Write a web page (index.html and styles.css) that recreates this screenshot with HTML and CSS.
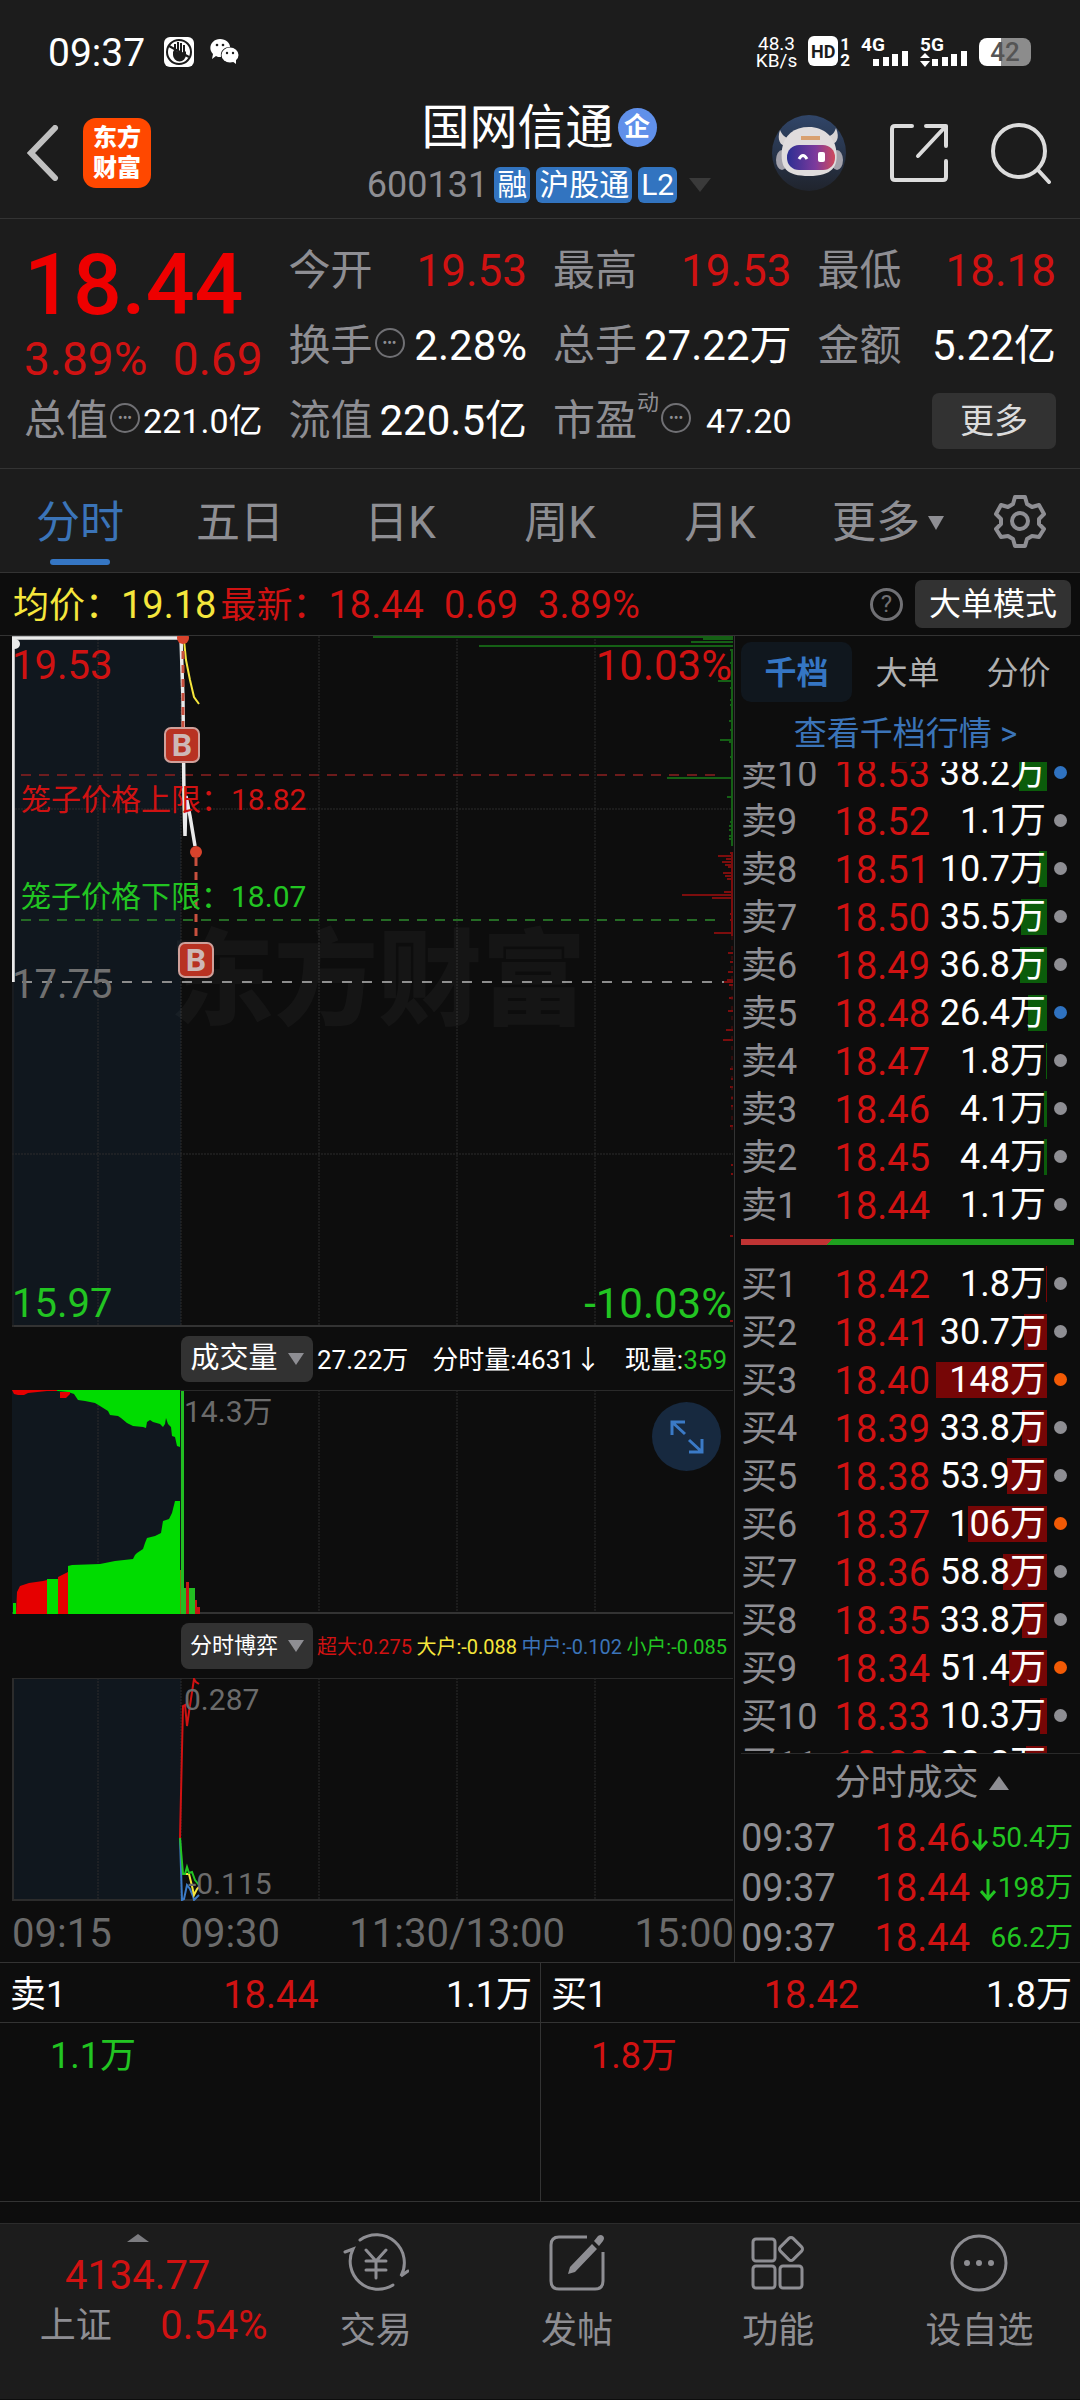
FILE: index.html
```html
<!DOCTYPE html>
<html lang="zh-CN">
<head>
<meta charset="utf-8">
<meta name="viewport" content="width=device-width, initial-scale=1">
<title>国网信通 600131</title>
<link rel="stylesheet" href="styles.css">
</head>
<body>
<div class="app">

  <div class="status">
    <span class="status-time">09:37</span>
    <svg class="status-hand" viewBox="0 0 30 30" aria-hidden="true"><rect width="30" height="30" rx="6" fill="#fff"/><circle cx="15" cy="15" r="12" fill="none" stroke="#1c1c1c" stroke-width="2"/><path d="M9 15v3a6 6 0 0 0 13 0v-4l-3 3-9-4z" fill="#1c1c1c"/><path d="M11 14V7M14 14V5M17 15V6M20 16V8M5 9l20 11" stroke="#1c1c1c" stroke-width="2" fill="none"/></svg>
    <svg class="status-chat" viewBox="0 0 29 26" aria-hidden="true"><path d="M10 0c6 0 10 4 10 8-6 0-10 4-9 10-2 0-4 0-5-1l-4 3 1-5C-3 9 2 0 10 0z" fill="#fff"/><ellipse cx="20" cy="16" rx="8.500" ry="7.500" fill="#fff"/><path d="M22 22l4 3v-5z" fill="#fff"/><circle cx="7" cy="6" r="1.300" fill="#1c1c1c"/><circle cx="13" cy="6" r="1.300" fill="#1c1c1c"/><circle cx="17" cy="14" r="1.200" fill="#1c1c1c"/><circle cx="23" cy="14" r="1.200" fill="#1c1c1c"/></svg>
    <div class="status-right">
      <div class="net-speed"><span>48.3</span><span>KB/s</span></div>
      <div class="hd"><span class="hd-box">HD</span><span class="hd-sims"><span>1</span><span>2</span></span></div>
      <div class="signal"><span>4G</span><svg viewBox="0 0 48 30" aria-hidden="true"><path d="M15 29v-7M25 29v-9M34 29V17M44 29V14" stroke="#fff" stroke-width="6"/></svg></div>
      <div class="signal"><span>5G</span><svg viewBox="0 0 48 30" aria-hidden="true"><path d="M15 29v-7M25 29v-9M34 29V17M44 29V14" stroke="#fff" stroke-width="6"/><path d="M0 21l5-5 5 5zM0 24l5 6 5-6z" fill="#fff"/></svg></div>
      <div class="battery">42</div>
    </div>
  </div>

  <header class="head">
    <div class="head-left">
      <button class="icon-btn back" aria-label="返回"><svg width="32" height="56" viewBox="0 0 32 56"><path d="M28 3L4 28l24 25" fill="none" stroke="#c0c0c0" stroke-width="6" stroke-linecap="round"/></svg></button>
      <a class="logo" href="#"><span>东方</span><span>财富</span></a>
    </div>
    <div class="title-box">
      <h1 class="name">国网信通<span class="ent">企</span></h1>
      <div class="sub"><span class="code">600131</span><span class="chip">融</span><span class="chip">沪股通</span><span class="chip">L2</span><svg class="sub-tri" width="22" height="14" viewBox="0 0 22 14"><path d="M0 0h22L11 14z" fill="#3a3a3a"/></svg></div>
    </div>
    <div class="head-actions">
      <button class="icon-btn" aria-label="智能助手"><svg width="76" height="78" viewBox="0 0 76 78"><defs><linearGradient id="sky" x1="0" y1="0" x2="0" y2="1"><stop offset="0" stop-color="#304568"/><stop offset="1" stop-color="#20242d"/></linearGradient><linearGradient id="visor" x1="0" y1="0" x2="1" y2="0"><stop offset="0" stop-color="#2c2f93"/><stop offset=".6" stop-color="#7d3a9c"/><stop offset="1" stop-color="#d04a5c"/></linearGradient></defs><ellipse cx="38" cy="39" rx="37" ry="38" fill="url(#sky)"/><path d="M9 16c-4 12 2 18 10 15l4-7c-7 1-11-1-14-8zM65 14c5 12-1 18-9 16l-4-7c8 0 11-3 13-9z" fill="#d8d4d4"/><ellipse cx="11" cy="46" rx="6" ry="10" fill="#a3a1aa"/><ellipse cx="66" cy="46" rx="6" ry="10" fill="#a3a1aa"/><path d="M38 13c15 0 25 10 27 22 3 18-4 27-27 27S9 54 11 35c2-14 12-22 27-22z" fill="#e0dcdd"/><path d="M30 24h19" stroke="#d9a070" stroke-width="4"/><rect x="16" y="31" width="48" height="25" rx="12" fill="url(#visor)"/><path d="M28 45q4-7 8 0" stroke="#fff" stroke-width="3" fill="none"/><rect x="47" y="38" width="7" height="10" rx="2" fill="#fff"/></svg></button>
      <button class="icon-btn" aria-label="分享"><svg width="60" height="60" viewBox="0 0 60 60" fill="none" stroke="#dcdcdc" stroke-width="4" stroke-linecap="round" stroke-linejoin="round"><path d="M23 3H6q-3 0-3 3v48q0 3 3 3h48q3 0 3-3V38M37 3h20v20M57 3L29 33"/></svg></button>
      <button class="icon-btn" aria-label="搜索"><svg width="60" height="62" viewBox="0 0 60 62" fill="none" stroke="#dcdcdc" stroke-width="4" stroke-linecap="round"><circle cx="28" cy="29" r="26"/><path d="M47 48l11 12"/></svg></button>
    </div>
  </header>

  <section class="quote">
    <div class="q-main">
      <strong class="q-price">18.44</strong>
      <div class="q-change"><span>3.89%</span><span>0.69</span></div>
    </div>
    <div class="q-cell"><span>今开</span><b class="red">19.53</b></div>
    <div class="q-cell"><span>最高</span><b class="red">19.53</b></div>
    <div class="q-cell"><span>最低</span><b class="red">18.18</b></div>
    <div class="q-cell"><span>换手<i class="more-dot">•••</i></span><b>2.28%</b></div>
    <div class="q-cell"><span>总手</span><b>27.22万</b></div>
    <div class="q-cell"><span>金额</span><b>5.22亿</b></div>
    <div class="q-cell"><span>总值<i class="more-dot">•••</i></span><b class="small">221.0亿</b></div>
    <div class="q-cell"><span>流值</span><b>220.5亿</b></div>
    <div class="q-cell"><span>市盈<sup>动</sup><i class="more-dot">•••</i></span><b class="small">47.20</b></div>
    <div class="q-cell q-end"><button class="q-more">更多</button></div>
  </section>

  <nav class="tabs">
    <button class="tab on">分时</button>
    <button class="tab">五日</button>
    <button class="tab">日K</button>
    <button class="tab">周K</button>
    <button class="tab">月K</button>
    <button class="tab tab-more">更多<svg width="16" height="14" viewBox="0 0 16 14"><path d="M0 0h16L8 14z" fill="#8e8e93"/></svg></button>
    <button class="tab tab-set" aria-label="设置"><svg width="52" height="54" viewBox="0 0 52 54" fill="none" stroke="#8e8e93" stroke-width="4" stroke-linejoin="round"><circle cx="26" cy="27" r="8"/><path d="M21 3h10l2 7 5 3 7-2 5 9-5 5v5l5 5-5 8-7-1-5 3-2 7H21l-2-7-5-3-7 1-5-8 5-5v-5l-5-5 5-9 7 2 5-3z"/></svg></button>
  </nav>

  <div class="avg-row">
    <span class="yellow">均价：<b>19.18</b></span>
    <span class="red">最新：<b>18.44</b><b>0.69</b><b>3.89%</b></span>
    <button class="help" aria-label="帮助">?</button>
    <button class="big-mode">大单模式</button>
  </div>

  <main class="board">
    <section class="charts">
      <div class="chart price-chart">
        <span class="mark">东方财富</span>
        <svg viewBox="0 0 722 691" preserveAspectRatio="none">
          <rect width="169" height="691" fill="#10171e"/>
          <path d="M86 0v691M169 0v691M307 0v691M445 0v691M583 0v691M0 173h721M0 518h721" stroke="#2c2c2c" stroke-dasharray="2 1" fill="none"/>
          <path d="M0 690h721" stroke="#333" stroke-width="2"/><path d="M1 346v345" stroke="#222"/>
          <path d="M10 346h711" stroke="#8c8c8c" stroke-width="2" stroke-dasharray="10 10"/>
          <path d="M9 139h702" stroke="#8c2020" stroke-width="1.500" stroke-dasharray="10 8"/>
          <path d="M9 284h702" stroke="#256b25" stroke-width="2" stroke-dasharray="10 8"/>
          <path d="M361 1H721M691 3H721M679 6H721M467 10H721M718 14H721M719 20H721M718 27H721M719 34H721M706 45H721M718 52H721M718 64H721M718 69H721M717 85H721M718 94H721M708 104H721M717 106H721M718 121H721M719 129H721M655 142H721M719 152H721M715 161H721M719 180H721M718 186H721M717 190H721M717 194H721M717 200H721M717 203H721M720 15V210" stroke="#156015" stroke-width="2"/>
          <path d="M718 217H721M706 220H721M714 223H721M710 226H721M713 229H721M716 231H721M711 237H721M713 240H721M715 243H721M719 248H721M712 256H721M670 259H721M700 262H721M718 278H721M718 284H721M702 297H721M716 317H721M718 326H721M716 336H721M715 344H721M712 346H721M717 349H721M717 362H721M716 375H721M714 394H721M711 404H721M718 433H721M719 443H721M718 451H721M719 462H721M719 470H721M718 490H721M719 529H721M719 538H721M718 600H721M718 685H721M720 217V300" stroke="#7c0d0d" stroke-width="2"/>
          <path d="M720 300V500" stroke="#5a0d0d" stroke-dasharray="4 6"/>
          <path d="M172 4l2 20 4 20 4 17 5 7" stroke="#f5e63c" stroke-width="2" fill="none"/>
          <path d="M1 346V2H169l2 62 1 100 1 36 1-40 4 20 3 18 2 12" stroke="#eaeaea" stroke-width="3.500" fill="none"/>
          <circle cx="3" cy="8" r="5" fill="#eaeaea"/>
          <path d="M171 15v76M184 222v84" stroke="#c8503e" stroke-width="3" stroke-dasharray="8 6"/>
          <circle cx="171" cy="2" r="6" fill="#d8432c"/><circle cx="184" cy="216" r="6" fill="#d8432c"/>
        </svg>
        <span class="lab top-left red">19.53</span>
        <span class="lab top-right red">10.03%</span>
        <span class="lab mid-left">17.75</span>
        <span class="lab bottom-left green">15.97</span>
        <span class="lab bottom-right green">-10.03%</span>
        <span class="cage cage-up red">笼子价格上限：18.82</span>
        <span class="cage cage-down green">笼子价格下限：18.07</span>
        <span class="buy buy-first">B</span>
        <span class="buy buy-second">B</span>
      </div>

      <div class="chart-head">
        <button class="pick">成交量<svg width="16" height="12" viewBox="0 0 16 12"><path d="M0 0h16L8 12z" fill="#8e8e93"/></svg></button>
        <div class="figures vol-figures"><span>27.22万</span><span>分时量:4631↓</span><span>现量:<span class="green">359</span></span></div>
      </div>

      <div class="chart volume-chart">
        <svg viewBox="0 0 722 224" preserveAspectRatio="none">
          <rect width="169" height="224" fill="#10171e"/>
          <path d="M86 0v224M307 0v224M445 0v224M583 0v224" stroke="#2c2c2c" stroke-dasharray="2 1"/>
          <path d="M0 .5h721" stroke="#2a2a2a"/><path d="M0 223h721" stroke="#333" stroke-width="2"/>
          <path d="M35 0L56 2 62 4 66 10 73 11 83 13 88 16 96 21 98 25 106 26 109 28 115 33 121 36 131 37 134 38 135 32 138 30 141 32 148 34 151 37 153 34 154 28 156 34 159 37 160 46 163 47 165 56 168 57V0z" fill="#00dc00"/>
          <path d="M0 0l2 4 4 1h6l4-2 19-2h10V0zM48 2v6h6l4-4V2z" fill="#e60000"/>
          <path d="M4 224l1-22 3-6 9-3 14-2 4-1v34z M46 224v-37l10-5v42z" fill="#e60000"/>
          <path d="M1 224v-11h3v11z M35 224v-35h11v35z M56 224v-48l4-1 28-1 15-3 18-2 2-4 2-2 6-4 2-6 2-5 8-2 6-3 2-12 6-2 3-6 3-12h5v114z" fill="#00dc00"/>
          <path d="M169 1h3v223h-3zM172 198h11v26h-11z" fill="#22bd22"/>
          <path d="M174 192h3v32h-3zM183 210h2v14h-2zM185 217h3v7h-3z" fill="#c81414"/><path d="M168.500 180v44" stroke="#7a7a10"/>
        </svg>
        <span class="mini mini-top">14.3万</span>
        <button class="expand" aria-label="全屏"><svg width="34" height="34" viewBox="0 0 34 34" fill="none" stroke="#3b7ac6" stroke-width="3"><path d="M2 15V2h13M2 2l13 12M32 19v13H19M32 32L19 20"/></svg></button>
      </div>

      <div class="chart-head">
        <button class="pick pick-small">分时博弈<svg width="16" height="12" viewBox="0 0 16 12"><path d="M0 0h16L8 12z" fill="#8e8e93"/></svg></button>
        <div class="figures game-figures"><span class="red">超大:0.275</span><span class="yellow">大户:-0.088</span><span class="blue">中户:-0.102</span><span class="green">小户:-0.085</span></div>
      </div>

      <div class="chart game-chart">
        <svg viewBox="0 0 722 223" preserveAspectRatio="none">
          <rect width="169" height="223" fill="#10171e"/>
          <path d="M86 0v223M169 0v223M307 0v223M445 0v223M583 0v223" stroke="#2c2c2c" stroke-dasharray="2 1"/>
          <path d="M0 .5h721" stroke="#2a2a2a"/><path d="M0 222h721M1 0v223" stroke="#2c2c2c" stroke-width="2"/>
          <g fill="none" stroke-width="2">
            <path d="M168 160L170 222 172 221 175 207 178 211 181 218 182 222 187 217" stroke="#3b7ac6"/>
            <path d="M171 196h6l3 12 2 9 3-6 2-2" stroke="#f5e63c"/>
            <path d="M168 160l3 36h2l2-7 2 6 3-1 3 8 4 5" stroke="#22c522"/>
            <path d="M168 160L171 28 173 27 175 48 177 34 182 1 184 4 187 6" stroke="#d01212"/>
          </g>
        </svg>
        <span class="mini mini-top">0.287</span>
        <span class="mini mini-bottom">-0.115</span>
      </div>

      <div class="axis"><span>09:15</span><span>09:30</span><span>11:30/13:00</span><span>15:00</span></div>
    </section>

    <aside class="side">
      <div class="side-tabs"><button class="side-tab on">千档</button><button class="side-tab">大单</button><button class="side-tab">分价</button></div>
      <a class="side-link" href="#">查看千档行情 &gt;</a>
      <div class="book asks">
        <table>
          <tr><th>卖10</th><td class="p">18.53</td><td class="v"><i style="width:28px"></i><span>38.2万</span></td><td class="d"><i class="hot-blue"></i></td></tr>
          <tr><th>卖9</th><td class="p">18.52</td><td class="v"><span>1.1万</span></td><td class="d"><i></i></td></tr>
          <tr><th>卖8</th><td class="p">18.51</td><td class="v"><i style="width:8px"></i><span>10.7万</span></td><td class="d"><i></i></td></tr>
          <tr><th>卖7</th><td class="p">18.50</td><td class="v"><i style="width:26px"></i><span>35.5万</span></td><td class="d"><i></i></td></tr>
          <tr><th>卖6</th><td class="p">18.49</td><td class="v"><i style="width:27px"></i><span>36.8万</span></td><td class="d"><i></i></td></tr>
          <tr><th>卖5</th><td class="p">18.48</td><td class="v"><i style="width:19px"></i><span>26.4万</span></td><td class="d"><i class="hot-blue"></i></td></tr>
          <tr><th>卖4</th><td class="p">18.47</td><td class="v"><i style="width:1px"></i><span>1.8万</span></td><td class="d"><i></i></td></tr>
          <tr><th>卖3</th><td class="p">18.46</td><td class="v"><i style="width:3px"></i><span>4.1万</span></td><td class="d"><i></i></td></tr>
          <tr><th>卖2</th><td class="p">18.45</td><td class="v"><i style="width:3px"></i><span>4.4万</span></td><td class="d"><i></i></td></tr>
          <tr><th>卖1</th><td class="p">18.44</td><td class="v"><span>1.1万</span></td><td class="d"><i></i></td></tr>
        </table>
      </div>
      <div class="ratio"></div>
      <div class="book bids">
        <table>
          <tr><th>买1</th><td class="p">18.42</td><td class="v"><i style="width:1px"></i><span>1.8万</span></td><td class="d"><i></i></td></tr>
          <tr><th>买2</th><td class="p">18.41</td><td class="v"><i style="width:23px"></i><span>30.7万</span></td><td class="d"><i></i></td></tr>
          <tr><th>买3</th><td class="p">18.40</td><td class="v"><i style="width:111px"></i><span>148万</span></td><td class="d"><i class="hot-orange"></i></td></tr>
          <tr><th>买4</th><td class="p">18.39</td><td class="v"><i style="width:25px"></i><span>33.8万</span></td><td class="d"><i></i></td></tr>
          <tr><th>买5</th><td class="p">18.38</td><td class="v"><i style="width:40px"></i><span>53.9万</span></td><td class="d"><i></i></td></tr>
          <tr><th>买6</th><td class="p">18.37</td><td class="v"><i style="width:79px"></i><span>106万</span></td><td class="d"><i class="hot-orange"></i></td></tr>
          <tr><th>买7</th><td class="p">18.36</td><td class="v"><i style="width:44px"></i><span>58.8万</span></td><td class="d"><i></i></td></tr>
          <tr><th>买8</th><td class="p">18.35</td><td class="v"><i style="width:25px"></i><span>33.8万</span></td><td class="d"><i></i></td></tr>
          <tr><th>买9</th><td class="p">18.34</td><td class="v"><i style="width:38px"></i><span>51.4万</span></td><td class="d"><i class="hot-orange"></i></td></tr>
          <tr><th>买10</th><td class="p">18.33</td><td class="v"><i style="width:7px"></i><span>10.3万</span></td><td class="d"><i></i></td></tr>
          <tr><th>买11</th><td class="p">18.32</td><td class="v"><i style="width:21px"></i><span>28.8万</span></td><td class="d"><i></i></td></tr>
        </table>
      </div>
      <button class="ticks-title">分时成交<svg width="20" height="14" viewBox="0 0 20 14"><path d="M10 0l10 14H0z" fill="#8e8e93"/></svg></button>
      <table class="ticks">
        <tr><td class="t">09:37</td><td class="p">18.46</td><td class="n"><svg width="16" height="22" viewBox="0 0 16 22"><path d="M8 0v19M1 12l7 8 7-8" fill="none" stroke="#22c522" stroke-width="3"/></svg>50.4万</td></tr>
        <tr><td class="t">09:37</td><td class="p">18.44</td><td class="n"><svg width="16" height="22" viewBox="0 0 16 22"><path d="M8 0v19M1 12l7 8 7-8" fill="none" stroke="#22c522" stroke-width="3"/></svg>198万</td></tr>
        <tr><td class="t">09:37</td><td class="p">18.44</td><td class="n">66.2万</td></tr>
      </table>
    </aside>
  </main>

  <section class="queues">
    <div class="queue">
      <div class="queue-head"><span>卖1</span><span class="red num">18.44</span><span>1.1万</span></div>
      <div class="queue-body"><span class="green">1.1万</span></div>
    </div>
    <div class="queue">
      <div class="queue-head"><span>买1</span><span class="red num">18.42</span><span>1.8万</span></div>
      <div class="queue-body"><span class="red">1.8万</span></div>
    </div>
  </section>

  <footer class="bottom">
    <a class="index" href="#">
      <svg width="22" height="8" viewBox="0 0 22 8"><path d="M11 0l11 8H0z" fill="#7c7c80"/></svg>
      <span class="index-value">4134.77</span>
      <span class="index-row"><span>上证</span><span class="index-rate">0.54%</span></span>
    </a>
    <a class="nav-item" href="#"><svg width="66" height="60" viewBox="0 0 66 60" fill="none" stroke="#8e8e93" stroke-width="3" stroke-linecap="round"><path d="M17 7A28 28 0 0 1 58 43l7-5M50 52A28 28 0 0 1 10 16L2 19M23 17l10 11 10-11M33 28v17M23 28h20M23 37h20"/></svg><span>交易</span></a>
    <a class="nav-item" href="#"><svg width="56" height="60" viewBox="0 0 56 60"><path d="M38 4H10q-8 0-8 8v36q0 8 8 8h36q8 0 8-8V19" fill="none" stroke="#8e8e93" stroke-width="3"/><path d="M43 11l5 5-22 23-7 2 2-7zM45 8l4-5q3-2 5 0t0 5l-4 5z" fill="#8e8e93"/></svg><span>发帖</span></a>
    <a class="nav-item" href="#"><svg width="54" height="60" viewBox="0 0 54 60" fill="none" stroke="#8e8e93" stroke-width="3"><rect x="2" y="6" width="22" height="22" rx="3"/><rect x="2" y="33" width="22" height="22" rx="3"/><rect x="29" y="33" width="22" height="22" rx="3"/><rect x="31" y="7" width="18" height="18" rx="3" transform="rotate(45 40 16)"/></svg><span>功能</span></a>
    <a class="nav-item" href="#"><svg width="60" height="60" viewBox="0 0 60 60"><circle cx="30" cy="30" r="27" fill="none" stroke="#8e8e93" stroke-width="3"/><g fill="#8e8e93"><circle cx="18" cy="30" r="3"/><circle cx="30" cy="30" r="3"/><circle cx="42" cy="30" r="3"/></g></svg><span>设自选</span></a>
  </footer>
</div>
</body>
</html>
```
FILE: styles.css
```css
* { box-sizing: border-box; }

body {
  margin: 0;
  background: #0d0d0d;
  color: #fff;
  font-family: Roboto, "Noto Sans CJK SC", sans-serif;
  font-size: 36px;
  line-height: 1;
}

button {
  display: flex;
  align-items: center;
  justify-content: center;
  padding: 0;
  border: 0;
  background: none;
  color: inherit;
  font: inherit;
}

a { color: inherit; text-decoration: none; }
b, i, th, h1 { font-weight: 400; font-style: normal; }
svg { flex: none; }

.red { color: #d01212; }
.green { color: #22c522; }
.yellow { color: #f5e63c; }
.blue { color: #3b74b8; }

.app { min-height: 100vh; }

/* Status bar */
.status {
  display: flex;
  align-items: center;
  height: 88px;
  padding: 16px 49px 0 48px;
  background: #1c1c1c;
}
.status-time { padding-top: 2px; font-size: 39px; }
.status-hand { width: 30px; height: 30px; margin-left: 19px; }
.status-chat { width: 29px; height: 26px; margin-left: 16px; }
.status-right { display: flex; align-items: center; gap: 11px; margin-left: auto; }
.net-speed { display: flex; flex-direction: column; align-items: center; font-size: 19px; line-height: 17px; }
.hd { display: flex; gap: 2px; }
.hd-box { width: 30px; height: 30px; border-radius: 6px; background: #fff; color: #1c1c1c; font-size: 18px; font-weight: 700; line-height: 31px; text-align: center; }
.hd-sims { display: flex; flex-direction: column; font-size: 17px; font-weight: 700; line-height: 16px; }
.signal { position: relative; width: 48px; height: 30px; font-size: 19px; font-weight: 700; line-height: 16px; }
.signal svg { position: absolute; inset: 0; }
.battery { width: 52px; height: 28px; border-radius: 8px; background: linear-gradient(90deg, #fff 42%, #8c8c8c 42%); color: #555; font-size: 26px; font-weight: 500; line-height: 28px; text-align: center; }

/* Header */
.head {
  display: grid;
  grid-template-columns: 280px 1fr 280px;
  align-items: center;
  height: 131px;
  padding: 0 29px 0 27px;
  border-bottom: 1px solid #333;
  background: #1c1c1c;
}
.head-left { display: flex; align-items: center; gap: 24px; }
.logo {
  display: flex;
  flex-direction: column;
  justify-content: center;
  width: 68px;
  height: 70px;
  border-radius: 13px;
  background: #ff4800;
  font-size: 24px;
  font-weight: 900;
  line-height: 30px;
  text-align: center;
}
.title-box { display: flex; flex-direction: column; align-items: center; gap: 10px; white-space: nowrap; }
.name { display: flex; align-items: center; gap: 4px; margin: 0; font-size: 48px; line-height: 58px; }
.ent { width: 39px; height: 39px; border-radius: 50%; background: #6090ea; font-size: 26px; font-weight: 700; line-height: 38px; text-align: center; }
.sub { display: flex; align-items: center; gap: 6px; margin-bottom: 5px; }
.code { color: #8e8e93; font-size: 36px; }
.chip { height: 36px; padding: 0 3px; border-radius: 6px; background: #3274c0; font-size: 30px; line-height: 36px; }
.sub-tri { margin-left: 6px; }
.head-actions { display: flex; align-items: center; justify-content: space-between; }

/* Quote figures */
.quote {
  display: grid;
  grid-template-columns: repeat(4, 1fr);
  grid-template-rows: 76px 74px 75px;
  column-gap: 26px;
  height: 250px;
  padding: 14px 24px 0;
  border-bottom: 1px solid #333;
  background: #1c1c1c;
}
.q-main { grid-row: span 2; }
.q-price { display: block; padding-top: 8px; color: #ee0000; font-size: 86px; font-weight: 500; line-height: 88px; }
.q-change { display: flex; justify-content: space-between; color: #d01212; font-size: 46px; line-height: 60px; }
.q-cell { display: flex; align-items: center; justify-content: space-between; font-size: 42px; white-space: nowrap; }
.q-cell span { display: flex; align-items: center; color: #8e8e93; }
.q-cell .red { font-size: 44px; }
.q-cell .small { font-size: 34px; }
.q-cell sup { align-self: flex-start; margin-top: -8px; font-size: 22px; line-height: 22px; }
.more-dot { display: flex; align-items: center; justify-content: center; width: 30px; height: 30px; margin: 0 0 6px 2px; border: 2px solid #707074; border-radius: 50%; color: #8e8e93; font-size: 14px; }
.q-cell.q-end { justify-content: flex-end; }
.q-more { width: 124px; height: 56px; border-radius: 7px; background: #323232; color: #dcdcdc; font-size: 34px; }

/* Period tabs */
.tabs {
  display: grid;
  grid-template-columns: repeat(6, 160fr) 120fr;
  height: 104px;
  border-bottom: 1px solid #333;
  background: #1c1c1c;
}
.tab { position: relative; padding-top: 4px; color: #8e8e93; font-size: 44px; }
.tab.on { color: #3b74b8; }
.tab.on::after { content: ""; position: absolute; bottom: 7px; left: 50%; width: 60px; height: 6px; margin-left: -30px; border-radius: 3px; background: #3576c4; }
.tab-more { gap: 8px; padding-left: 16px; }
.tab-set { padding-top: 0; }

.avg-row {
  display: flex;
  align-items: center;
  height: 63px;
  padding: 0 9px 0 13px;
  border-bottom: 1px solid #333;
}
.avg-row > span { padding-top: 2px; }
.avg-row .red { margin-left: 4px; }
.avg-row b { font-size: 38px; }
.avg-row b + b { margin-left: 20px; }
.help { width: 33px; height: 33px; margin-left: auto; border: 3px solid #707074; border-radius: 50%; color: #707074; font-size: 24px; }
.big-mode { width: 156px; height: 48px; margin-left: 12px; border-radius: 7px; background: #323232; font-size: 32px; }

/* Charts and order book */
.board {
  display: grid;
  grid-template-columns: minmax(0, 735fr) minmax(0, 345fr);
  border-bottom: 1px solid #333;
}
.charts { padding-left: 12px; border-right: 1px solid #333; }
.chart { position: relative; }
.chart svg { display: block; width: 100%; height: 100%; }
.price-chart { height: 691px; }
.volume-chart { height: 224px; }
.game-chart { height: 223px; }
.mark { position: absolute; z-index: 1; top: 294px; left: 158px; color: rgba(255, 255, 255, .035); font-size: 104px; font-weight: 900; line-height: 104px; white-space: nowrap; }
.lab, .cage, .buy, .mini { position: absolute; z-index: 2; white-space: nowrap; }
.lab { font-size: 42px; line-height: 42px; }
.top-left, .mid-left, .bottom-left { left: 0; font-size: 40px; }
.top-left, .top-right { top: 9px; }
.top-right, .bottom-right { right: 2px; }
.mid-left { top: 328px; color: #707070; }
.bottom-left, .bottom-right { bottom: 2px; }
.cage { left: 9px; font-size: 30px; line-height: 30px; }
.cage-up { top: 149px; }
.cage-down { top: 246px; }
.buy { width: 36px; height: 36px; border: 2px solid #cfa09a; border-radius: 7px; background: #b83222; color: #cdb8b6; font-size: 32px; font-weight: 700; line-height: 33px; text-align: center; }
.buy-first { top: 91px; left: 152px; }
.buy-second { top: 306px; left: 166px; }
.chart-head { display: flex; align-items: center; height: 63px; padding-left: 169px; }
.volume-chart + .chart-head { height: 64px; }
.pick { flex: none; gap: 10px; width: 132px; height: 46px; border-radius: 8px; background: #323232; font-size: 29px; }
.pick-small { font-size: 22px; }
.figures { display: flex; flex: 1; justify-content: space-between; padding: 2px 7px 0 4px; white-space: nowrap; }
.vol-figures { font-size: 26px; }
.game-figures { font-size: 20px; }
.mini { left: 172px; color: #6b6b6b; font-size: 30px; line-height: 30px; }
.mini-top { top: 7px; }
.mini-bottom { bottom: 2px; left: 176px; }
.expand { position: absolute; top: 12px; right: 13px; width: 69px; height: 69px; border-radius: 50%; background: #17293f; }
.expand svg { width: 34px; height: 34px; }
.axis { display: grid; grid-template-columns: 168fr 138fr 276fr 138fr; align-items: center; height: 61px; padding-top: 4px; color: #6b6b6b; font-size: 40px; white-space: nowrap; }
.axis span:nth-child(3) { text-align: center; }
.axis span:nth-child(4) { text-align: right; }

.side { padding: 6px 0 0 6px; }
.side-tabs { display: grid; grid-template-columns: repeat(3, 1fr); margin-right: 6px; }
.side-tab { height: 60px; padding-top: 2px; border-radius: 10px; color: #b0b0b0; font-size: 32px; }
.side-tab.on { background: #10171e; color: #3576c4; font-weight: 700; }
.side-link { display: block; height: 60px; padding-right: 10px; color: #3b74b8; font-size: 33px; line-height: 64px; text-align: center; }
.book { overflow: hidden; }
.asks { display: flex; align-items: flex-end; height: 467px; }
.bids { height: 493px; }
table { width: 100%; border-collapse: collapse; table-layout: fixed; }
th, td { height: 48px; padding: 0; white-space: nowrap; }
.book th, .book .p { padding-top: 1px; }
.book th { width: 82px; color: #8e8e93; text-align: left; }
.p { color: #d01212; font-size: 38px; text-align: right; }
.v { position: relative; width: 117px; text-align: right; }
.v i { position: absolute; top: 6px; right: 0; height: 36px; background: #0b5c0b; }
.bids .v i { background: #760606; }
.v span { position: relative; padding-right: 1px; }
.d { width: 33px; }
.d i { display: block; width: 13px; height: 13px; margin: 0 0 2px 7px; border-radius: 50%; background: #8e8e93; }
.d .hot-blue { background: #2f72c0; }
.d .hot-orange { background: #f25a05; }
.ratio { height: 6px; margin: 10px 6px 15px 0; background: linear-gradient(135deg, #c03434 27%, #1fa01f 27%); }
.ticks-title { gap: 10px; width: 100%; height: 59px; padding-left: 22px; border-top: 1px solid #2a2a2a; color: #8e8e93; font-size: 36px; }
.ticks td { height: 50px; padding-top: 2px; }
.ticks .t { width: 100px; color: #8e8e93; font-size: 38px; }
.ticks .n { width: 110px; padding-right: 7px; color: #22c522; font-size: 28px; text-align: right; }
.ticks svg { margin-right: 2px; vertical-align: middle; }

/* Level-one queues */
.queues { display: grid; grid-template-columns: 1fr 1fr; height: 239px; margin-bottom: 21px; border-bottom: 1px solid #333; }
.queue + .queue { border-left: 1px solid #333; }
.queue-head { display: grid; grid-template-columns: 1fr auto 1fr; align-items: center; height: 60px; padding: 4px 8px 0 10px; border-bottom: 1px solid #333; }
.queue-head span:last-child { text-align: right; }
.num { font-size: 38px; }
.queue-body { width: 136px; padding-top: 15px; text-align: right; }

/* Bottom navigation */
.bottom {
  display: grid;
  grid-template-columns: 275fr repeat(4, 201fr);
  height: 176px;
  border-top: 1px solid #2c2c2c;
  background: #1c1c1c;
  color: #8e8e93;
}
.index { display: flex; flex-direction: column; align-items: center; padding-top: 10px; }
.index-value { padding-top: 14px; color: #d01212; font-size: 40px; }
.index-row { display: flex; align-items: center; justify-content: space-between; width: 228px; margin-left: 32px; padding-top: 10px; }
.index-rate { color: #d01212; font-size: 40px; }
.nav-item { display: flex; flex-direction: column; align-items: center; gap: 20px; padding-top: 9px; }
```
